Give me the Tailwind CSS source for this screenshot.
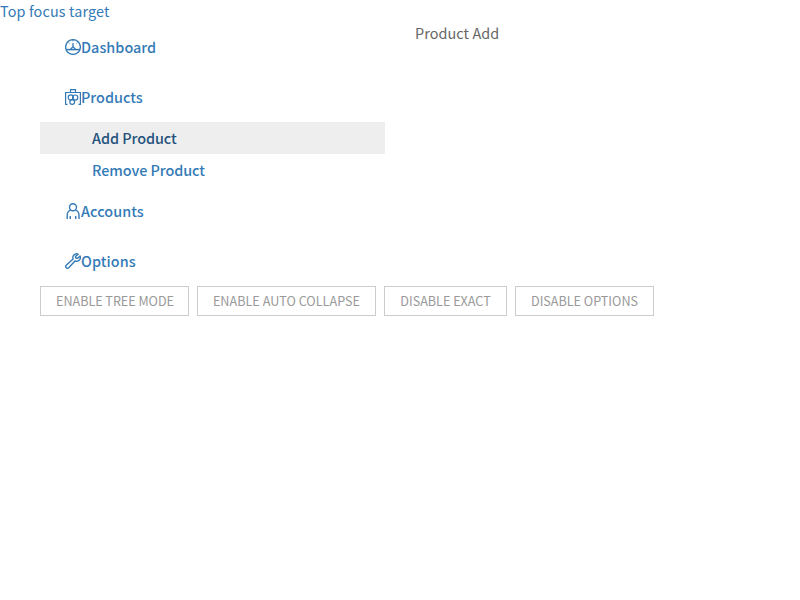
<!DOCTYPE html>
<html lang="en">
<head>
<meta charset="utf-8">
<title>Product Add</title>
<script src="https://cdn.jsdelivr.net/npm/@tailwindcss/browser@4"></script>
</head>
<body class="bg-white font-['Noto_Sans_CJK_SC','Noto_Sans',sans-serif] text-[14.4px] text-[#666] leading-6">
<a href="#" class="block h-6 w-max leading-[22px] tracking-[0.13px] text-[#337ab7]">Top focus target</a>
<main class="flex h-[262px] pl-10">
  <nav class="w-[345px] font-medium text-[#337ab7]">
    <a href="#" class="flex h-12 items-center pb-0.5 pl-[25px]">
      <svg class="size-4" viewBox="0 0 16 16" fill="none" stroke="currentColor" stroke-width="1.3"><circle cx="8" cy="8" r="7.4"/><path d="M1 10.6h14" stroke-width="1.5"/><path d="M8 4v4M5.6 10.2L8 7.6l2.4 2.6"/><path d="M8 1v1.4M3.6 3.6l.9.9M12.4 3.6l-.9.9" stroke-width="1"/></svg><span class="tracking-[0.03px]">Dashboard</span></a>
    <a href="#" class="mt-0.5 flex h-12 items-center pb-0.5 pl-[25px]">
      <svg class="size-4" viewBox="0 0 16 16" fill="none" stroke="currentColor" stroke-width="1.2"><path d="M2.5 15.4H.6V3.5h14.8v11.9h-1.9M5.5 3.5V.7h5v2.8"/><circle cx="5.8" cy="8.4" r="2.6"/><circle cx="10.2" cy="8.6" r="2.6"/><circle cx="7.2" cy="13" r="2.4"/></svg><span>Products</span></a>
    <a href="#" class="flex h-8 items-center bg-[#eee] pl-[52px] tracking-[-0.04px] text-[#23527c]">Add Product</a>
    <a href="#" class="flex h-8 items-center pl-[52px] tracking-[-0.06px]">Remove Product</a>
    <a href="#" class="mt-0.5 flex h-12 items-center pb-0.5 pl-[25px]">
      <svg class="size-4" viewBox="0 0 16 16" fill="none" stroke="currentColor" stroke-width="1.4"><circle cx="8" cy="4.2" r="3.5"/><path d="M2.2 16v-3.5c0-3 1.3-5 3.6-5.4M14 16v-3.5c0-3-1.3-5-3.6-5.4M5.3 13V16M10.7 13V16"/></svg><span class="tracking-[0.06px]">Accounts</span></a>
    <a href="#" class="mt-0.5 flex h-12 items-center pb-0.5 pl-[25px]">
      <svg class="size-4" viewBox="0 0 16 16" fill="none" stroke="currentColor" stroke-width="1.4" stroke-linejoin="round"><path d="M13.2 1.2c-2-1-5.2.2-5.4 3.1 0 .8.1 1.2.3 1.7L1.2 12.3c-1.5 1.5.9 4.1 2.5 2.5L10 8c2.7 1 5.4-.8 5.4-3.5 0-.6-.1-1.1-.3-1.6l-2.5 2.4-1.8-.3-.3-1.5z"/></svg><span class="tracking-[0.1px]">Options</span></a>
  </nav>
  <section class="pl-[30px]"><p class="leading-[18px] tracking-[0.08px]">Product Add</p></section>
</main>
<div class="flex gap-2 pl-10 text-[12.6px] text-[#999]">
  <button class="h-[30px] w-[149px] border border-[#ccc] pl-px tracking-[-0.03px] uppercase">Enable Tree Mode</button>
  <button class="h-[30px] w-[179px] border border-[#ccc] tracking-[0.03px] uppercase">Enable Auto Collapse</button>
  <button class="h-[30px] w-[123px] border border-[#ccc] uppercase">Disable Exact</button>
  <button class="h-[30px] w-[139px] border border-[#ccc] uppercase">Disable Options</button>
</div>
</body>
</html>
